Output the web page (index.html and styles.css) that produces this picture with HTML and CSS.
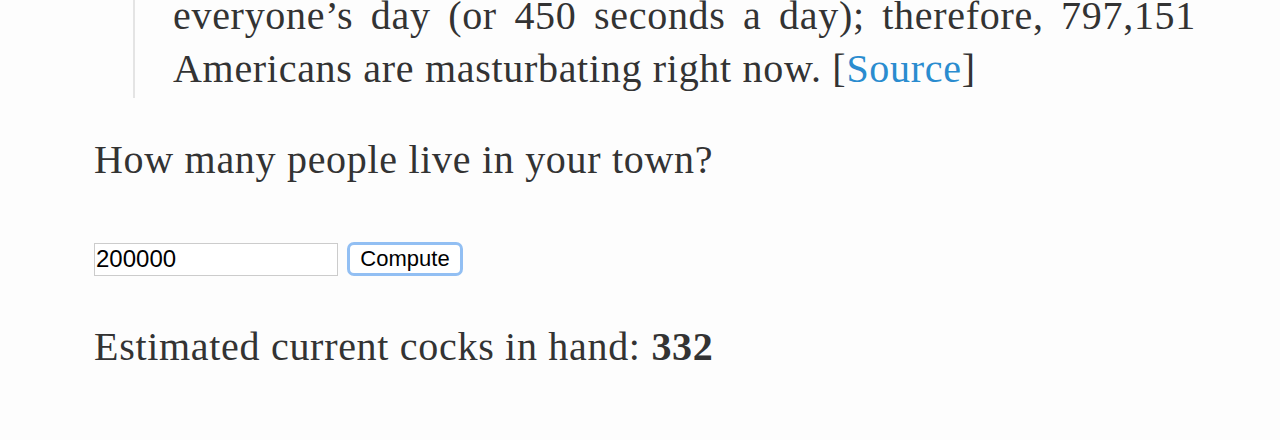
FILE: index.html
```html
<!doctype html>
<html lang="en">
<head>
    <meta charset="UTF-8">
    <meta name="viewport" content="width=device-width, initial-scale=1.0">
    <title>Cocks in hand</title>
    <link rel="stylesheet" href="styles.css">
</head>
<body>
    <main class="post">
        <blockquote class="quote">
            <p><span class="full-line">everyone’s day (or 450 seconds a day); therefore, 797,151</span>
            Americans are masturbating right now. [<a href="#">Source</a>]</p>
        </blockquote>

        <h3 class="ask">How many people live in your town?</h3>

        <form class="calc" id="calc">
            <input type="text" id="population" class="calc-input" value="200000">
            <button type="submit" class="calc-btn">Compute</button>
        </form>

        <p class="result">Estimated current cocks in hand: <strong id="answer">332</strong></p>
    </main>
</body>
</html>
```

FILE: styles.css
```css
body {
    margin: 0;
    background-color: #fdfdfd;
    color: #333333;
    font-family: "Liberation Serif", "Times New Roman", serif;
}

.post {
    padding: 0 84px 0 94px;
    font-size: 40px;
    line-height: 53px;
    letter-spacing: 0.7px;
}

.quote {
    margin: -11px 0 0 39px;
    padding: 0 0 3px 38px;
    border-left: 2px solid #e4e4e4;
}

.quote p {
    margin: 0;
    text-align: justify;
}

.full-line {
    display: block;
    text-align-last: justify; /* the line above was justified in the original */
}

.quote a {
    color: #2a8ccf;
    text-decoration: none;
}

.ask {
    margin: 35px 0 0;
    font-size: 40px;
    font-weight: normal;
}

.calc {
    display: flex;
    align-items: center;
    gap: 9px;
    margin-top: 56px;
    letter-spacing: 0;
}

.calc-input {
    box-sizing: border-box;
    width: 244px;
    height: 33px;
    margin: 0;
    padding: 0 1px;
    border: 1px solid #cccccc;
    background-color: #ffffff;
    color: #000000;
    font-family: "Liberation Sans", Arial, sans-serif;
    font-size: 24px;
}

.calc-btn {
    box-sizing: border-box;
    width: 116px;
    height: 34px;
    margin: 0;
    padding: 0;
    border: 3px solid #92bff3;
    border-radius: 7px;
    background-color: #ffffff;
    color: #000000;
    font-family: "Liberation Sans", Arial, sans-serif;
    font-size: 22px;
    cursor: pointer;
}

.result {
    margin: 44px 0 0;
}

.result strong {
    font-weight: bold;
}
```
